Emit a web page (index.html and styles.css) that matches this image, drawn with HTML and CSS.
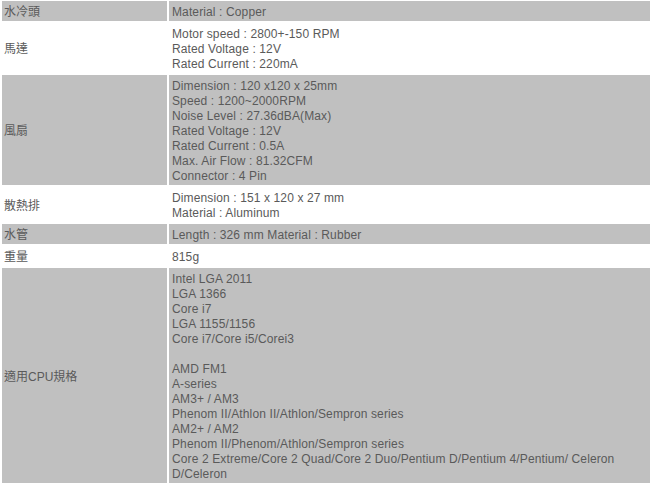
FILE: index.html
```html
<!DOCTYPE html>
<html>
<head>
<meta charset="utf-8">
<link rel="stylesheet" href="styles.css">
</head>
<body>
<table class="spec">
<tr class="alt"><td class="k">水冷頭</td><td class="v">Material : Copper</td></tr>
<tr><td class="k">馬達</td><td class="v">Motor speed : 2800+-150 RPM<br>Rated Voltage : 12V<br>Rated Current : 220mA</td></tr>
<tr class="alt"><td class="k">風扇</td><td class="v">Dimension : 120 x120 x 25mm<br>Speed : 1200~2000RPM<br>Noise Level : 27.36dBA(Max)<br>Rated Voltage : 12V<br>Rated Current : 0.5A<br>Max. Air Flow : 81.32CFM<br>Connector : 4 Pin</td></tr>
<tr><td class="k">散熱排</td><td class="v">Dimension : 151 x 120 x 27 mm<br>Material : Aluminum</td></tr>
<tr class="alt"><td class="k">水管</td><td class="v">Length : 326 mm Material : Rubber</td></tr>
<tr><td class="k">重量</td><td class="v">815g</td></tr>
<tr class="alt"><td class="k">適用CPU規格</td><td class="v">Intel LGA 2011<br>LGA 1366<br>Core i7<br>LGA 1155/1156<br>Core i7/Core i5/Corei3<br><br>AMD FM1<br>A-series<br>AM3+ / AM3<br>Phenom II/Athlon II/Athlon/Sempron series<br>AM2+ / AM2<br>Phenom II/Phenom/Athlon/Sempron series<br>Core 2 Extreme/Core 2 Quad/Core 2 Duo/Pentium D/Pentium 4/Pentium/ Celeron D/Celeron</td></tr>
</table>
</body>
</html>
```
FILE: styles.css
```css
html, body {
  margin: 0;
  padding: 0;
  background: #fff;
}
.spec {
  width: 652px;
  margin-top: -1px;
  border-collapse: separate;
  border-spacing: 2px;
  font-family: "Liberation Sans", Arial, "Noto Sans CJK TC", sans-serif;
  font-size: 12px;
  line-height: 15px;
  color: #5a5a5a;
}
.spec td {
  padding: 4px 3px 1px 2px;
  vertical-align: middle;
  text-align: left;
}
.spec .k {
  width: 160px;
}
.spec .v {
  padding-left: 3px;
  letter-spacing: 0.12px;
}
.spec tr.alt td {
  background: #c0c0c0;
}
```
